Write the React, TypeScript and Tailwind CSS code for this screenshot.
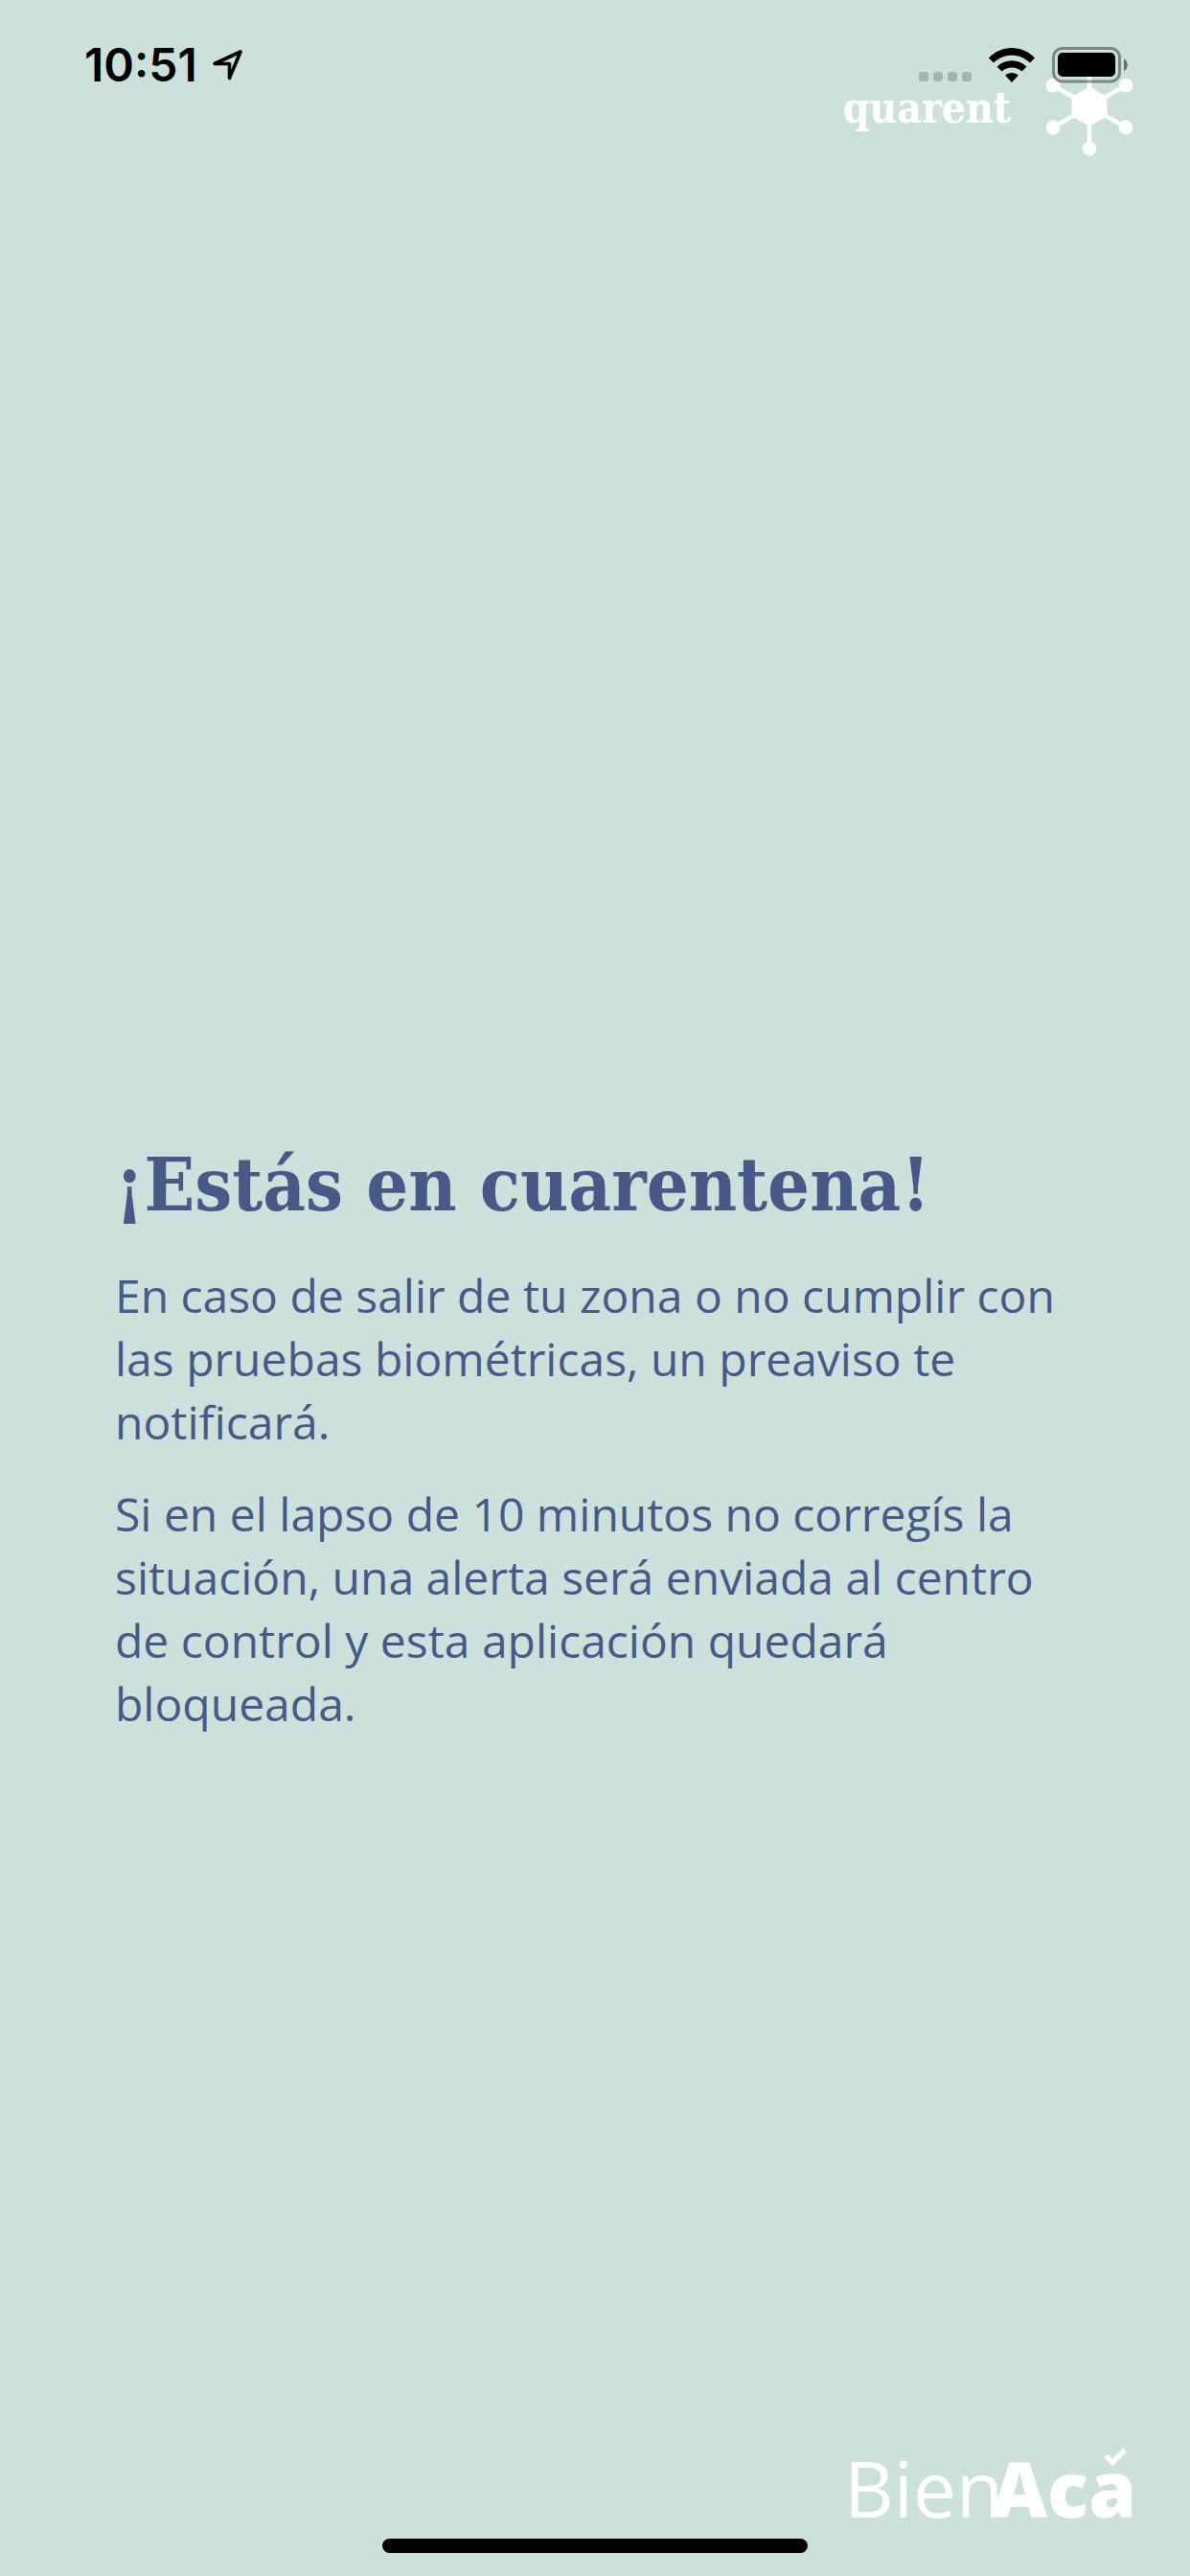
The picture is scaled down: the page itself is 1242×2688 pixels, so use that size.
function LocationArrow() {
  return (
    <svg viewBox="0 0 32 32" className="size-8" fill="none" aria-hidden="true">
      <path d="M2 14.500 29 2 17.500 29.500 17.500 14.500Z" stroke="#000" strokeWidth="3.600" strokeLinejoin="round" />
    </svg>
  );
}

function WifiIcon() {
  return (
    <svg viewBox="0 0 48 36" className="h-9 w-12" aria-hidden="true">
      <path d="M0 10.500C13-3.500 35-3.500 48 10.500L43 15.500C32.500 5 15.500 5 5 15.500Z" />
      <path d="M8.500 19.500C17 11 31 11 39.500 19.500L34.500 24.500C28.500 19 19.500 19 13.500 24.500Z" />
      <path d="M17 28.500C21 25 27 25 31 28.500L24 36Z" />
    </svg>
  );
}

function BatteryIcon() {
  return (
    <svg viewBox="0 0 80 38" className="h-[38px] w-20" aria-hidden="true">
      <rect x="1.500" y="1.500" width="69" height="34.500" rx="9.500" fill="none" stroke="#000" strokeOpacity="0.4" strokeWidth="3" />
      <rect x="6" y="6" width="60" height="25" rx="5" />
      <path d="M75 12.500C80 14.500 80 23 75 25Z" fillOpacity="0.5" />
    </svg>
  );
}

function VirusLogo() {
  return (
    <svg viewBox="0 0 92 104" className="h-26 w-23" fill="#fff" aria-hidden="true">
      <g stroke="#fff" strokeWidth="4.500">
        <path d="M46 8V96M8 30 84 74M8 74 84 30" />
      </g>
      <path d="M46 31.500 64.500 42V62L46 73 27.500 62V42Z" />
      <circle cx="46" cy="8" r="7.400" />
      <circle cx="8" cy="30" r="7.400" />
      <circle cx="84" cy="30" r="7.400" />
      <circle cx="8" cy="74" r="7.400" />
      <circle cx="84" cy="74" r="7.400" />
      <circle cx="46" cy="96" r="7.400" />
    </svg>
  );
}

function StatusBar() {
  return (
    <div className="relative z-10 flex h-34 items-center justify-between pr-16 pl-22">
      <div className="flex items-center gap-4">
        <span className="font-['Inter'] text-[48px] leading-12 font-semibold text-black">10:51</span>
        <LocationArrow />
      </div>
      <div className="flex items-center">
        <div className="mt-6 mr-[18px] flex gap-[5px]">
          <span className="size-[10px] rounded-[3px] bg-black/20" />
          <span className="size-[10px] rounded-[3px] bg-black/20" />
          <span className="size-[10px] rounded-[3px] bg-black/20" />
          <span className="size-[10px] rounded-[3px] bg-black/20" />
        </div>
        <WifiIcon />
        <div className="ml-[18px]">
          <BatteryIcon />
        </div>
      </div>
    </div>
  );
}

export default function App() {
  return (
    <div className="relative flex min-h-screen flex-col bg-[#cde1dc]">
      <StatusBar />
      <div className="absolute top-[59px] right-[59px] flex items-center gap-9 text-white">
        <span className="pt-1 font-['Roboto_Slab','DejaVu_Serif_Condensed','DejaVu_Serif',serif] text-[44px] leading-[60px] font-bold">
          quarent
        </span>
        <VirusLogo />
      </div>

      <main className="flex flex-1 flex-col justify-center px-30 pt-77 text-[#475a87]">
        <h1 className="font-['Roboto_Slab','DejaVu_Serif_Condensed','DejaVu_Serif',serif] text-[77px] leading-[110px] font-bold">
          ¡Estás en cuarentena!
        </h1>
        <div className="mt-7 flex flex-col gap-[30px] font-['Open_Sans',sans-serif] text-[48px] leading-[66px]">
          <p>En caso de salir de tu zona o no cumplir con las pruebas biométricas, un preaviso te notificará.</p>
          <p>
            Si en el lapso de 10 minutos no corregís la situación, una alerta será enviada al centro de control y esta
            aplicación quedará bloqueada.
          </p>
        </div>
      </main>

      <footer className="flex justify-end pr-14 pb-11">
        <div className="relative font-['Open_Sans',sans-serif] text-[80px] leading-24 text-white" aria-label="BienAcá">
          <span>Bien</span>
          <span className="-ml-3 font-extrabold">Aca</span>
          <svg viewBox="0 0 26 22" className="absolute top-[6px] right-2 h-[22px] w-[26px]" fill="none" aria-hidden="true">
            <path d="M2.500 8.500 9 15.500 22 2.500" stroke="#fff" strokeWidth="5.500" />
          </svg>
        </div>
      </footer>
      <div className="absolute inset-x-0 bottom-6 mx-auto h-[15px] w-[444px] rounded-full bg-black" />
    </div>
  );
}
